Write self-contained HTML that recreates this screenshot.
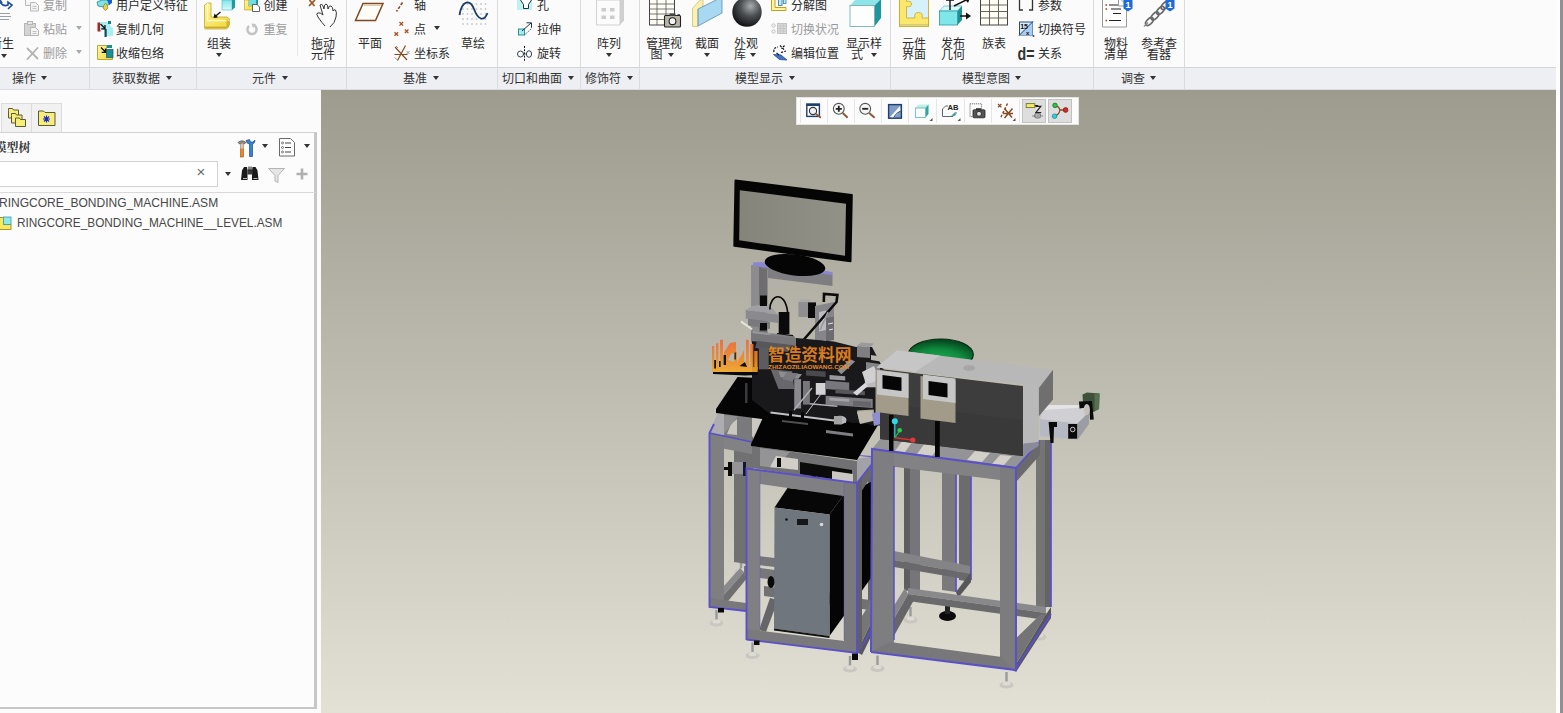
<!DOCTYPE html>
<html lang="zh-CN">
<head>
<meta charset="utf-8">
<title>RINGCORE_BONDING_MACHINE</title>
<style>
*{box-sizing:border-box;margin:0;padding:0}
html,body{width:1563px;height:713px;overflow:hidden;background:#fbfbfc}
body{position:relative;font-family:"Liberation Sans","Noto Sans CJK SC",sans-serif;font-size:12px;color:#2b2b2b}
.abs{position:absolute}
#ribbon{position:absolute;left:0;top:0;width:1556px;height:67px;background:#fbfbfc}
#glabels{position:absolute;left:0;top:67px;width:1556px;height:23px;z-index:2;background:#eeeff2;border-top:1px solid #d3d5d9;border-bottom:1px solid #dcdde0}
.vsep{position:absolute;top:0;width:1px;height:89px;background:#d9dbdf;z-index:3}
.t{position:absolute;white-space:nowrap;line-height:14px;height:14px;font-size:12px;color:#2b2b2b}
.g{color:#9a9a9a}
.gl{z-index:3;position:absolute;top:72px;white-space:nowrap;line-height:14px;font-size:12px;color:#333}
.ar{z-index:3;position:absolute;width:0;height:0;border-left:3.5px solid transparent;border-right:3.5px solid transparent;border-top:4px solid #333}
.ar.g{border-top-color:#aaa}
#leftp{position:absolute;left:0;top:89px;width:321px;height:624px;background:#fbfbfb}
#view{position:absolute;left:321px;top:89px;width:1235px;height:624px;background:linear-gradient(#9d9b8e,#e3e1d6)}
.tree{font-size:13px;line-height:16px;color:#484848;white-space:nowrap;transform-origin:0 0}
#redge{position:absolute;left:1556px;top:0;width:4px;height:713px;background:#fdfdfd}
#redge2{position:absolute;left:1560px;top:0;width:3px;height:713px;background:#909092}
</style>
</head>
<body>
<div id="ribbon"></div>
<div id="glabels"></div>
<div class="vsep" style="left:89px"></div><div class="vsep" style="left:196px"></div><div class="vsep" style="left:346px"></div><div class="vsep" style="left:497px"></div><div class="vsep" style="left:580px"></div><div class="vsep" style="left:639px"></div><div class="vsep" style="left:890px"></div><div class="vsep" style="left:1093px"></div><div class="vsep" style="left:1184px"></div><div class="abs" style="left:297px;top:8px;width:1px;height:48px;background:#e6e7ea"></div>
<div class="t" style="left:-10px;top:37px">新生</div>
<div class="ar" style="left:0.5px;top:54px"></div>
<div class="t g" style="left:43px;top:-1.5px">复制</div>
<div class="t g" style="left:43px;top:22.5px">粘贴</div>
<div class="ar g" style="left:75.5px;top:26px"></div>
<div class="t g" style="left:43px;top:46.5px">删除</div>
<div class="ar g" style="left:75.5px;top:50px"></div>
<div class="t" style="left:116px;top:-1.5px">用户定义特征</div>
<div class="t" style="left:116px;top:22.5px">复制几何</div>
<div class="t" style="left:116px;top:46.5px">收缩包络</div>
<div class="t" style="left:207px;top:37px">组装</div>
<div class="ar" style="left:215.5px;top:53px"></div>
<div class="t" style="left:263.500px;top:-1.5px">创建</div>
<div class="t g" style="left:263.500px;top:22.5px">重复</div>
<div class="t" style="left:311px;top:36.5px">拖动</div>
<div class="t" style="left:311px;top:48px">元件</div>
<div class="t" style="left:358px;top:37px">平面</div>
<div class="t" style="left:414px;top:-1.5px">轴</div>
<div class="t" style="left:414px;top:22.5px">点</div>
<div class="ar" style="left:433.5px;top:26px"></div>
<div class="t" style="left:414px;top:46.5px">坐标系</div>
<div class="t" style="left:461px;top:37px">草绘</div>
<div class="t" style="left:537px;top:-1.5px">孔</div>
<div class="t" style="left:537px;top:22.5px">拉伸</div>
<div class="t" style="left:537px;top:46.5px">旋转</div>
<div class="t" style="left:597px;top:37px">阵列</div>
<div class="ar" style="left:605.5px;top:53px"></div>
<div class="t" style="left:646px;top:36.5px">管理视</div>
<div class="t" style="left:650.500px;top:48px">图</div>
<div class="ar" style="left:667.5px;top:53px"></div>
<div class="t" style="left:695px;top:37px">截面</div>
<div class="ar" style="left:703.5px;top:53px"></div>
<div class="t" style="left:734px;top:36.5px">外观</div>
<div class="t" style="left:734px;top:48px">库</div>
<div class="ar" style="left:749.5px;top:53px"></div>
<div class="t" style="left:791px;top:-1.5px">分解图</div>
<div class="t g" style="left:791px;top:22.5px">切换状况</div>
<div class="t" style="left:791px;top:46.5px">编辑位置</div>
<div class="t" style="left:846px;top:36.5px">显示样</div>
<div class="t" style="left:851px;top:48px">式</div>
<div class="ar" style="left:870.500px;top:53px"></div>
<div class="t" style="left:902px;top:36.5px">元件</div>
<div class="t" style="left:902px;top:48px">界面</div>
<div class="t" style="left:941px;top:36.5px">发布</div>
<div class="t" style="left:941px;top:48px">几何</div>
<div class="t" style="left:982px;top:37px">族表</div>
<div class="t" style="left:1038px;top:-1.5px">参数</div>
<div class="t" style="left:1038px;top:22.5px">切换符号</div>
<div class="t" style="left:1038px;top:46.5px">关系</div>
<div class="t" style="left:1104px;top:36.5px">物料</div>
<div class="t" style="left:1104px;top:48px">清单</div>
<div class="t" style="left:1141px;top:36.5px">参考查</div>
<div class="t" style="left:1147px;top:48px">看器</div>
<div class="gl" style="left:12px">操作</div>
<div class="ar" style="left:40.5px;top:76px"></div>
<div class="gl" style="left:112px">获取数据</div>
<div class="ar" style="left:165.5px;top:76px"></div>
<div class="gl" style="left:252px">元件</div>
<div class="ar" style="left:281.5px;top:76px"></div>
<div class="gl" style="left:403px">基准</div>
<div class="ar" style="left:432.5px;top:76px"></div>
<div class="gl" style="left:502px">切口和曲面</div>
<div class="ar" style="left:567.5px;top:76px"></div>
<div class="gl" style="left:585px">修饰符</div>
<div class="ar" style="left:626.5px;top:76px"></div>
<div class="gl" style="left:735px">模型显示</div>
<div class="ar" style="left:788.5px;top:76px"></div>
<div class="gl" style="left:962px">模型意图</div>
<div class="ar" style="left:1014.5px;top:76px"></div>
<div class="gl" style="left:1121px">调查</div>
<div class="ar" style="left:1149.5px;top:76px"></div><svg class="abs" style="left:0;top:0" width="1200" height="67" viewBox="0 0 1200 67">
<defs>
<radialGradient id="sph" cx="0.62" cy="0.3" r="0.75"><stop offset="0" stop-color="#a9adb0"/><stop offset="0.45" stop-color="#4d5154"/><stop offset="1" stop-color="#0c0d0e"/></radialGradient>
<linearGradient id="yl" x1="0" y1="0" x2="1" y2="1"><stop offset="0" stop-color="#fdf6a0"/><stop offset="1" stop-color="#f2d838"/></linearGradient>
<linearGradient id="cy" x1="0" y1="0" x2="0" y2="1"><stop offset="0" stop-color="#7fe6ea"/><stop offset="1" stop-color="#d8fafa"/></linearGradient>
</defs>
<!-- regenerate -->
<path d="M0,2 Q3,7 8,5 L8,2 L12,5 L8,9 M0,0 L2,3" fill="none" stroke="#1f4f9a" stroke-width="1.6"/>
<path d="M0,13.5h10M0,16.5h11M0,19.5h9" stroke="#9aa0a8" stroke-width="1"/>
<!-- copy (gray) -->
<g fill="#f2f2f2" stroke="#b9b9b9" stroke-width="1"><path d="M25.5,0v5.5h5"/><path d="M30.5,2.5h5l3,3v5.5h-8z"/><path d="M32.5,6.5h4M32.5,8.5h4" stroke-width="0.8"/></g>
<!-- paste (gray) -->
<g stroke="#b5b5b5" stroke-width="1"><rect x="24.5" y="23.5" width="11" height="12" fill="#d4d4d4"/><rect x="27.5" y="21.5" width="5" height="3" fill="#e6e6e6"/><path d="M30.5,27.5h5l3,3v5h-8z" fill="#f4f4f4"/><path d="M32.5,31.5h4M32.5,33.5h4" stroke-width="0.8"/></g>
<!-- delete X (gray) -->
<path d="M27.5,48.5l10,10M37.5,48l-10,11" stroke="#b2b2b2" stroke-width="1.8" stroke-linecap="round"/>
<!-- UDF -->
<polygon points="97,2 102,0 108,0 110,4 104,7 98,6" fill="#7fe2e8" stroke="#1d8a90" stroke-width="0.8"/><polygon points="107,0 112,0 112,3 109,5" fill="#1f5fc8"/><path d="M105.5,3 Q110,8 105.5,10.5 Q101,8 105.5,3Z" fill="#e8cf48" stroke="#8a7a20" stroke-width="0.7"/>
<!-- copy geom -->
<rect x="97.5" y="22.5" width="3" height="9" fill="#b02222"/><polygon points="100,22 110,22 110,26 113,28 113,36 106,36 106,30 100,30" fill="#a9eef0"/><rect x="104.5" y="29" width="2.2" height="8" fill="#0f4f55"/><rect x="108" y="21" width="3" height="3" fill="#168088"/><path d="M100.5,24l4.5,4.5M105,25v3.8h-3.8" stroke="#111" stroke-width="1.3" fill="none"/>
<!-- shrinkwrap -->
<path d="M97.5,45.5h9v8h6v6h-15z" fill="url(#yl)" stroke="#a89420" stroke-width="0.8"/><rect x="106.5" y="49.5" width="6.5" height="8" fill="#1b8f96" stroke="#0f5f65" stroke-width="0.7"/><rect x="107" y="45" width="5" height="3" fill="#1b8f96"/><path d="M101,47.5l4.5,4.5M105.5,48.5v3.8h-3.8" stroke="#111" stroke-width="1.3" fill="none"/>
<!-- assemble -->
<polygon points="222,0 232,0 232,10 222,10" fill="url(#cy)" stroke="#4db8bf" stroke-width="0.6"/><polygon points="232,0 235,0 235,7.5 232,10" fill="#1f9aa2"/>
<path d="M204.5,5l3,-2h3.5v14h16l2.5,2v6l-2.5,2.5h-22.500z" fill="url(#yl)" stroke="#bfa828" stroke-width="0.8"/><path d="M207.500,3.200v17.500h22" fill="none" stroke="#fffbd0" stroke-width="1.2"/><path d="M226.500,19l2.500,2v6l-2.500,2.500h-22v-3h22z" fill="#c9a820" opacity="0.75"/>
<path d="M220.500,12l-6,5" stroke="#111" stroke-width="1.3"/><polygon points="213.500,18 214.500,13.500 218,17.500" fill="#111"/>
<!-- create -->
<path d="M244.500,0h4v6h6v4h-10z" fill="url(#yl)" stroke="#bfa828" stroke-width="0.7"/><rect x="249" y="0" width="8" height="6" fill="#6fdde2"/><rect x="256" y="0" width="2" height="6" fill="#1f9aa2"/><path d="M252.500,4.500h4.500l2.500,2.500v4.500h-7z" fill="#fff" stroke="#555" stroke-width="0.9"/>
<!-- repeat (gray) -->
<path d="M249,26 A4.600,4.600 0 1 0 254.500,25.600" fill="none" stroke="#c2c2c2" stroke-width="2.4"/><polygon points="251.500,23.500 256,24 253,28" fill="#c2c2c2"/>
<!-- drag hand -->
<path d="M309.500,0l5,6M315,0l-6,6" stroke="#a3521e" stroke-width="1.7"/>
<path d="M320,5 Q322,3 323,6 L324,9 Q324,4 326,4 Q328,4 328,9 Q329,5 331,6 Q333,7 333,11 Q334,9 335.500,10 Q337,12 336,17 Q335,23 330,27 M320,5 L323,15 Q320,12 317.500,13 Q316,14 318,17 Q322,23 325,26" fill="#fff" stroke="#333" stroke-width="1"/>
<!-- plane -->
<polygon points="363,3.500 383,3.500 375.500,20.500 355.500,20.500" fill="#fffdf8" stroke="#7a4a22" stroke-width="1.5"/><polygon points="364,5 381,5 380.500,6 363.500,6" fill="#e8c9a0"/>
<!-- axis -->
<path d="M402.500,2.500L396.500,11.500" stroke="#8a4a22" stroke-width="1.6" stroke-dasharray="3 1.600"/>
<!-- point -->
<path d="M399.500,22l3.600,3.600M403.100,22l-3.600,3.600M394.500,32.200l3.600,3.600M398.100,32.200l-3.600,3.600M404.800,29.500l3.600,3.600M408.400,29.500l-3.600,3.600" stroke="#a3521e" stroke-width="1.3"/>
<!-- csys -->
<path d="M395,47l12,13M405.500,45.500l-8,15M394.500,54.500h13" stroke="#8a4a22" stroke-width="1.200"/><path d="M406.500,51l3,3M409.500,51l-3,3M394.500,57.500l3,2.500M396,46l2,2" stroke="#8a8a8a" stroke-width="0.900"/>
<!-- sketch -->
<g fill="#c3c7cc"><circle cx="463" cy="4" r="0.9"/><circle cx="467.500" cy="4" r="0.9"/><circle cx="472" cy="4" r="0.9"/><circle cx="476.500" cy="4" r="0.9"/><circle cx="481" cy="4" r="0.9"/><circle cx="485.500" cy="4" r="0.9"/>
<circle cx="463" cy="9" r="0.9"/><circle cx="467.500" cy="9" r="0.9"/><circle cx="472" cy="9" r="0.9"/><circle cx="476.500" cy="9" r="0.9"/><circle cx="481" cy="9" r="0.9"/><circle cx="485.500" cy="9" r="0.9"/>
<circle cx="463" cy="14" r="0.9"/><circle cx="467.500" cy="14" r="0.9"/><circle cx="472" cy="14" r="0.9"/><circle cx="476.500" cy="14" r="0.9"/><circle cx="481" cy="14" r="0.9"/><circle cx="485.500" cy="14" r="0.9"/>
<circle cx="463" cy="19" r="0.9"/><circle cx="467.500" cy="19" r="0.9"/><circle cx="472" cy="19" r="0.9"/><circle cx="476.500" cy="19" r="0.9"/><circle cx="481" cy="19" r="0.9"/><circle cx="485.500" cy="19" r="0.9"/>
<circle cx="463" cy="24" r="0.9"/><circle cx="467.500" cy="24" r="0.9"/><circle cx="472" cy="24" r="0.9"/><circle cx="476.500" cy="24" r="0.9"/><circle cx="481" cy="24" r="0.9"/><circle cx="485.500" cy="24" r="0.9"/></g>
<path d="M459.500,15 C462,0 470,-1 474,9 C478,20 484,22 487.500,13" fill="none" stroke="#1d3a66" stroke-width="1.8"/>
<!-- hole -->
<rect x="517" y="0" width="15" height="10" fill="#bff1f3"/><path d="M520.500,0l3,4.500v4h5v-4l3,-4.500" fill="#fff" stroke="#234" stroke-width="1"/>
<!-- extrude -->
<rect x="518.500" y="29" width="6" height="6" fill="#a5ecee" stroke="#1d8a90" stroke-width="0.9"/><path d="M522,31l9,-8M526.500,22.800h5v5" fill="none" stroke="#234" stroke-width="1"/><path d="M524.500,35l7,-6.500" stroke="#234" stroke-width="0.8" stroke-dasharray="1.500 1"/>
<!-- revolve -->
<circle cx="520.500" cy="54" r="3" fill="none" stroke="#345" stroke-width="1"/><ellipse cx="529" cy="54" rx="2.600" ry="3.300" fill="none" stroke="#345" stroke-width="1"/><path d="M524.500,46v15" stroke="#111" stroke-width="1" stroke-dasharray="2 1.200"/><path d="M523.500,54h3" stroke="#345" stroke-width="0.8"/>
</svg>
<svg class="abs" style="left:0;top:0" width="1200" height="67" viewBox="0 0 1200 67">
<!-- pattern cube -->
<polygon points="596.5,0 620,0 620,25 596.500,25" fill="#fbfbfb" stroke="#c8c8c8" stroke-width="0.800"/><polygon points="620,0 624,0 624,20.500 620,25" fill="#cfcfcf"/>
<g fill="#c9cbcd"><rect x="601.500" y="8" width="4.500" height="3.500"/><rect x="610" y="8" width="4.500" height="3.500"/><rect x="601.500" y="15.500" width="4.500" height="3.500"/><rect x="610" y="15.500" width="4.500" height="3.500"/></g>
<!-- manage views -->
<rect x="649.500" y="-1" width="25" height="26" fill="#fffef6" stroke="#444" stroke-width="1"/><path d="M649.500,4h25M649.500,9h25M649.500,14h25M649.500,19.500h25M657,-1v26M666,-1v26" stroke="#555" stroke-width="0.800" fill="none"/>
<rect x="664.500" y="15.500" width="16" height="11.500" rx="1" fill="#b9b5a8" stroke="#222" stroke-width="1.100"/><rect x="669.500" y="13.500" width="6" height="2.500" fill="#444"/><circle cx="672.500" cy="21.200" r="3.400" fill="#f4f4f4" stroke="#222" stroke-width="1.100"/><rect x="677.500" y="14.300" width="2.500" height="1.600" fill="#222"/>
<!-- section -->
<polygon points="692.500,8.500 699,1 703,-1 703,18 698,26.500 692.500,26.500" fill="#fbf1b0" stroke="#c8b860" stroke-width="0.700"/><polygon points="698,9 722,-3 722,13 698,26" fill="#a9d8f2" stroke="#5a8fb0" stroke-width="0.800"/><path d="M698,9v17" stroke="#8aa" stroke-width="0.800"/>
<!-- sphere -->
<circle cx="747" cy="12" r="14.700" fill="url(#sph)"/>
<!-- explode -->
<path d="M771.500,0v10.500h14.500v-3h-11v-7.500" fill="#fff3a0" stroke="#c0a020" stroke-width="1"/><rect x="778.500" y="-1" width="3.500" height="6.500" fill="#bfe6f6" stroke="#3a7fb0" stroke-width="0.900"/><rect x="783.500" y="-1" width="2.500" height="4.500" fill="#bfe6f6" stroke="#3a7fb0" stroke-width="0.800"/>
<!-- toggle status (gray) -->
<g stroke="#c4c4c4" fill="#f4f4f4"><circle cx="773.500" cy="25.500" r="1.700"/><circle cx="773.500" cy="31.500" r="1.700"/><rect x="777.500" y="23.500" width="9" height="10" fill="#d9d9d9"/></g><path d="M777.500,26h9M777.500,28.500h9M777.500,31h9M780.500,23.500v10M783.500,23.500v10" stroke="#c0c0c0" stroke-width="0.600"/>
<!-- edit position -->
<path d="M774,52 Q773,47.500 778,47 M780,45.500 l4.500,4.500 M784.500,45.500 l-3,3.200M781,52.500 l5,-1.500" fill="none" stroke="#111" stroke-width="1.200" stroke-dasharray="2.200 1.200"/><polygon points="773.500,54.500 781,55 787,60 779.500,59.500" fill="#3c74c8" stroke="#1d3f7e" stroke-width="0.700"/><path d="M776.500,53 l2.500,2" stroke="#111" stroke-width="1.100"/>
<!-- display style cube -->
<polygon points="850,5.500 856,-1 881,-1 874.500,5.500" fill="#8fe4ea"/><polygon points="874.500,5.500 881,-1 881,18 874.500,26.500" fill="#1f969e"/><rect x="850" y="5.500" width="24.500" height="21" fill="#fdfefe" stroke="#6aa" stroke-width="0.800"/>
<!-- component interface -->
<rect x="899.500" y="-1" width="29" height="27.500" fill="#d6f1fa" stroke="#d2b632" stroke-width="1"/><path d="M899.500,-1h7v2.500q5,-1 5,2.500q0,3.500 -5,2.500v11.500h8.500q-1.500,-5.500 3.500,-5.500q5,0 3.500,5.500h6.500v7h-29z" fill="#fbe76c" stroke="#c8a828" stroke-width="0.800"/>
<!-- publish geometry -->
<polygon points="939.500,11 944,6 962,6 957.500,11" fill="#d9f8f8" stroke="#4aa" stroke-width="0.600"/><polygon points="957.500,11 962,6 962,20 957.500,25" fill="#1f8f96"/><rect x="939.500" y="11" width="18" height="14" fill="#7fe6ea" stroke="#2a9aa0" stroke-width="0.800"/>
<path d="M950,10v-11M946,0h8M954,6l12,-6M960,16h8" stroke="#111" stroke-width="1.400" fill="none"/><polygon points="970,-2 964,-2 968,3" fill="#111"/><polygon points="971,16 966,12.500 966,19.500" fill="#111"/>
<!-- family table -->
<rect x="980.500" y="-1" width="27" height="26" fill="#fffef4" stroke="#444" stroke-width="1"/><path d="M980.500,5h27M980.500,11.500h27M980.500,18h27M989.500,-1v26M998.500,-1v26" stroke="#555" stroke-width="0.900" fill="none"/>
<!-- parameters -->
<path d="M1023,-1h-3.500v11h3.500M1029,-1h3.500v11h-3.500" fill="none" stroke="#333" stroke-width="1.300"/>
<!-- switch symbols -->
<rect x="1019.500" y="22" width="13" height="13" fill="#d9ecfa" stroke="#2a4f8a" stroke-width="1"/><polygon points="1019.500,35 1032.500,22 1032.500,35" fill="#a9cdf0"/><path d="M1019,35.500L1033,21.500" stroke="#1d3f7e" stroke-width="1"/><text x="1020.200" y="29.300" font-family="'Liberation Sans',sans-serif" font-size="7" font-weight="bold" fill="#111">15</text><text x="1026" y="34.500" font-family="'Liberation Sans',sans-serif" font-size="6" font-weight="bold" fill="#111">x</text><circle cx="1033.500" cy="36" r="1" fill="#2a4f8a"/>
<text x="1017.500" y="59.500" font-family="'Liberation Sans',sans-serif" font-size="17.500" font-weight="bold" fill="#333" textLength="17" lengthAdjust="spacingAndGlyphs">d=</text>
<!-- BOM -->
<path d="M1102.500,-1v28h24v-22l-6,-6z" fill="#fff" stroke="#9a9a9a" stroke-width="1"/><path d="M1118.500,-1v7h8" fill="none" stroke="#9a9a9a" stroke-width="1"/>
<path d="M1109,5h9M1111,9h10M1113,13.500h8M1109,20.500h12" stroke="#222" stroke-width="1.100"/><path d="M1105.500,5h1.600M1105.500,9h1.600M1105.500,20.500h1.600" stroke="#b03a1a" stroke-width="1.600"/>
<path d="M1123.500,-1h9v9.500l-4.500,3l-4.500,-3z" fill="#1d6ad8"/><text x="1125.600" y="8" font-family="'Liberation Sans',sans-serif" font-size="9" font-weight="bold" fill="#fff">1</text>
<!-- ref viewer -->
<g fill="none" stroke="#6a6a6a" stroke-width="1.700"><ellipse cx="1149.500" cy="21.500" rx="4.800" ry="2.600" transform="rotate(-45 1149.500 21.500)"/><ellipse cx="1155" cy="16" rx="4.800" ry="2.600" transform="rotate(-45 1155 16)"/><ellipse cx="1160.500" cy="10.500" rx="4.800" ry="2.600" transform="rotate(-45 1160.500 10.500)"/><ellipse cx="1165" cy="5.500" rx="4.800" ry="2.600" transform="rotate(-45 1165 5.500)"/></g>
<path d="M1144,26.500l4,-4" stroke="#8a8a8a" stroke-width="1.500"/>
<path d="M1165.500,-1h9v9.500l-4.500,3l-4.500,-3z" fill="#1d6ad8"/><text x="1167.600" y="8" font-family="'Liberation Sans',sans-serif" font-size="9" font-weight="bold" fill="#fff">1</text>
</svg>

<div id="leftp">
<div class="abs" style="left:1px;top:14px;width:31px;height:30px;background:#f1f1f1;border:1px solid #dcdcdc;border-bottom:none"></div>
<div class="abs" style="left:31px;top:14px;width:31px;height:30px;background:#f1f1f1;border:1px solid #dcdcdc;border-bottom:none"></div>
<div class="abs" style="left:-2px;top:43px;width:319px;height:577px;border:2px solid #c6c6c6;border-right:3px solid #c6c6c6;border-top:1px solid #d2d2d2;background:#fcfcfc"></div>
<div class="abs" style="left:-5.500px;top:51px;font-size:12px;font-weight:bold;color:#333;line-height:16px;white-space:nowrap;font-family:'Liberation Serif','Noto Serif CJK SC',serif">模型树</div>
<div class="ar" style="left:261.500px;top:55px"></div>
<div class="ar" style="left:303.500px;top:55px"></div>
<div class="abs" style="left:-2px;top:72px;width:220px;height:26px;border:1px solid #d2d2d2;background:#fff"></div>
<div class="abs" style="left:196.500px;top:73.500px;font-size:15px;line-height:18px;color:#6a6a6a">×</div>
<div class="ar" style="left:224.500px;top:83px"></div>
<div class="abs" style="left:0;top:103px;width:316px;height:1px;background:#d9d9d9"></div>
<div class="abs tree" style="left:-1.500px;top:105.500px;transform:scaleX(0.925)">RINGCORE_BONDING_MACHINE.ASM</div>
<div class="abs tree" style="left:16.500px;top:125.500px;transform:scaleX(0.909)">RINGCORE_BONDING_MACHINE__LEVEL.ASM</div>
<svg class="abs" style="left:0;top:0" width="321" height="150" viewBox="0 89 321 150">
<!-- tab 1 folders -->
<g fill="#f7ee7a" stroke="#5a5a3a" stroke-width="1"><path d="M8.500,110.500v-2h4l1,1.500h5v8h-10z"/><path d="M11.500,115.500v-2h4l1,1.500h5.500v8h-10.500z"/><path d="M15.500,120v-2h4l1,1.500h5v7h-10z"/></g>
<!-- tab 2 folder star -->
<path d="M38.500,113v-2h5l1.500,1.500h10v13h-16.500z" fill="#f7ee7a" stroke="#5a5a3a" stroke-width="1"/><path d="M46.500,115.500v7M43,119h7M44,116.500l5,5M49,116.500l-5,5" stroke="#1a2ac8" stroke-width="1.100"/>
<!-- tools icon -->
<path d="M238,142.500 q4,-3.500 8,0 l-1.500,1.500 h-5z" fill="#8a8a8a" stroke="#555" stroke-width="0.700"/><rect x="240.500" y="143.500" width="3" height="13.500" fill="#e88a2a" stroke="#9a5210" stroke-width="0.600"/><rect x="240.500" y="143.500" width="3" height="5" fill="#c8c8c8"/>
<path d="M246,140.500 q1,3.500 3.500,3.500 v12.500 h3 v-12.500 q2.500,-0.500 2.500,-4 l-2,2 h-2.500 l-1,-2.500z" fill="#3a7fd0" stroke="#1d4f8a" stroke-width="0.700"/>
<!-- list icon -->
<path d="M279.500,138.500h11l4,4v13.500h-15z" fill="#fff" stroke="#6a6a6a" stroke-width="1"/><path d="M285,143h6M285,147.500h6M285,152h6" stroke="#444" stroke-width="1"/><circle cx="282.500" cy="143" r="1" fill="none" stroke="#444" stroke-width="0.700"/><circle cx="282.500" cy="147.500" r="1" fill="none" stroke="#444" stroke-width="0.700"/><circle cx="282.500" cy="152" r="1" fill="none" stroke="#444" stroke-width="0.700"/>
<!-- binoculars -->
<path d="M242,170.500l2,-3.500h3l0.500,3.500v9.500h-6.500z M252.500,167h3l2,3.500l1,9.500h-6.500v-9.500z" fill="#1a1a1a"/><rect x="247.500" y="169.500" width="5" height="5" fill="#3a3a3a"/><path d="M243,178.500h4M253.500,178.500h4" stroke="#bbb" stroke-width="1"/><path d="M249,166.500v4M251,166.500v4" stroke="#111" stroke-width="1"/>
<!-- funnel (gray) -->
<path d="M268.500,168.500h16l-6.500,7v7l-3,-1.500v-5.500z" fill="#e6e6e6" stroke="#b4b4b4" stroke-width="1"/>
<!-- plus (gray) -->
<path d="M302,168.500v11M296.500,174h11" stroke="#b0b0b0" stroke-width="2.600"/>
<!-- tree asm icon -->
<path d="M-1,217.500h5v7h7v5h-12z" fill="#f7e860" stroke="#9a8a20" stroke-width="0.900"/><rect x="3.500" y="217" width="7.500" height="7.500" fill="#8fe8ee" stroke="#3a9aa0" stroke-width="0.800"/>
</svg>

</div>
<div id="view">
<svg class="abs" style="left:0;top:0" width="1235" height="624" viewBox="321 89 1235 624">
<defs>
<linearGradient id="scr" x1="0" y1="0" x2="1" y2="0"><stop offset="0" stop-color="#84847a"/><stop offset="1" stop-color="#929288"/></linearGradient>
<radialGradient id="dome" cx="0.45" cy="0.75" r="0.7"><stop offset="0" stop-color="#1fb45a"/><stop offset="0.6" stop-color="#0f8a3e"/><stop offset="1" stop-color="#064a20"/></radialGradient>
<g id="foot"><rect x="-1.2" y="-13" width="2.4" height="11" fill="#9a9a9a"/><ellipse cx="0" cy="0" rx="7" ry="3.6" fill="#c9c7c0"/><ellipse cx="0" cy="-1.5" rx="4" ry="2" fill="#dddbd4"/></g>
</defs>
<!-- ===== feet (back) ===== -->
<use href="#foot" x="741" y="572"/>
<use href="#foot" x="910.5" y="620"/>
<use href="#foot" x="1039.5" y="637"/>
<use href="#foot" x="829" y="605"/>
<ellipse cx="947.5" cy="616" rx="8.5" ry="5" fill="#0a0a0a"/><rect x="945" y="606" width="5" height="8" fill="#222"/>
<!-- ===== Frame C back ===== -->
<g stroke-linejoin="round">
<!-- back-right post -->
<polygon points="1036,440 1051,440 1051,607 1036,607" fill="#757576"/>
<polygon points="1045,440 1051,440 1051,607 1045,607" fill="#646466"/>
<line x1="1051" y1="440" x2="1051" y2="607" stroke="#5a50c8" stroke-width="1.7"/>
<!-- back-left post of C -->
<polygon points="904,462 920,464 920,592 904,590" fill="#76767a"/>
<polygon points="904,462 910,463 910,591 904,590" fill="#5e5e62"/>
<!-- frame D inner posts -->
<polygon points="942,468 956,470 956,592 942,590" fill="#7a7a7c"/>
<line x1="956" y1="470" x2="956" y2="592" stroke="#5a50c8" stroke-width="1.7"/>
<polygon points="959,470 971,472 971,582 959,580" fill="#6c6c6e"/>
<line x1="971" y1="472" x2="971" y2="580" stroke="#5a50c8" stroke-width="1.7"/>
<!-- frame D bottom beams -->
<polygon points="894,551 970,566 970,574 894,560" fill="#848486"/>
<polygon points="894,560 970,574 970,580 894,567" fill="#69696b"/>
<polygon points="956,592 971,572 971,582 958,598" fill="#58585a"/>
<!-- C bottom back beam -->
<polygon points="908,588 1046,607 1046,613 908,594" fill="#89898b"/>
<polygon points="908,594 1046,613 1046,620 908,601" fill="#6a6a6c"/>
<!-- C bottom left side beam -->
<polygon points="882,640 908,594 914,600 890,643" fill="#666668"/>
<polygon points="875,636 905,588 908,594 882,640" fill="#868688"/>
<!-- C bottom right side beam -->
<polygon points="1013,669 1047,613 1051,607 1051,618 1016,672" fill="#565658"/>
<polygon points="1002,652 1040,615 1047,613 1013,669" fill="#747476"/>
<line x1="1014" y1="671" x2="1051" y2="614" stroke="#5a50c8" stroke-width="1.8"/>
</g>
<!-- ===== Frame A back ===== -->
<g>
<polygon points="734,414 753,416 753,565 734,562" fill="#717172"/>
<!-- A bottom left side beam -->
<polygon points="722,597 744,572 748,577 724,606" fill="#6f6f70"/>
<polygon points="715,596 740,568 744,572 722,597" fill="#8a8a8c"/>
<!-- A back bottom beam -->
<polygon points="744,566 775,570 775,580 744,576" fill="#777779"/>
</g>
<!-- ===== Frame B back parts ===== -->
<g>
<!-- back-left post B -->
<polygon points="759,556 775,558 775,567 759,565" fill="#767678"/>
<!-- back-right post B -->
<polygon points="868,462 880,462 880,600 868,602" fill="#646466"/>
<!-- bottom back beam -->
<polygon points="764,586 870,600 870,610 764,596" fill="#717173"/>
<!-- bottom left side beam -->
<polygon points="759,630 770,598 778,600 766,632" fill="#666668"/>
<!-- bottom right side beam -->
<polygon points="857,652 880,604 884,610 862,655" fill="#58585a"/>
<polygon points="847,640 872,600 880,604 857,652" fill="#767678"/>
<line x1="858" y1="653" x2="884" y2="608" stroke="#5a50c8" stroke-width="1.7"/>
</g>
<!-- ===== Cabinet ===== -->
<g>
<polygon points="829.5,514.5 844,494.5 871,482 871,578 829.5,636" fill="#050505"/>
<polygon points="774.5,507.5 787.5,488 844,494.5 829.5,514.5" fill="#070707"/>
<polygon points="774.5,507.5 829.5,514.5 829.5,636 774,628.5" fill="#6f767d"/>
<polygon points="774,628.5 829.5,636 829.5,638 774,630.5" fill="#111"/>
<rect x="797" y="519" width="11" height="6" fill="#15171a"/>
<circle cx="786.5" cy="519.5" r="1.3" fill="#111"/><circle cx="821.5" cy="524.5" r="1.8" fill="#d8d8d8"/>
<ellipse cx="771" cy="582" rx="3.5" ry="6" fill="#0a0a0a"/>
</g>
<!-- ===== Frame A front ===== -->
<g>
<!-- top left side beam -->
<polygon points="709.5,433 717,414 724,414 724,436" fill="#adadb1"/>
<!-- inner diagonal light area under plate -->
<polygon points="724,414 752,416 752,442 724,436" fill="#7a7a7c"/>
<polygon points="731,424 737,419 737,435 727,434" fill="#c9c7bf"/><polygon points="724,415 738,416 724,434" fill="#909092"/><polygon points="752,418 767,418 761,431 752,437" fill="#cac8c0"/>
<!-- top front beam -->
<polygon points="709.5,433 752,442 752,454 709.5,446" fill="#828284"/>
<!-- front-left post -->
<polygon points="709.5,433 724,436 724,608 709.5,607" fill="#7f7f81"/>
<!-- bottom front beam -->
<polygon points="709.5,598 746,603 746,611 709.5,607" fill="#79797b"/>
<polyline points="714,424 709.5,433 709.5,607 746,611" fill="none" stroke="#5a50c8" stroke-width="1.9"/>
<polyline points="709.5,433 752,442" fill="none" stroke="#5a50c8" stroke-width="1.7"/>
<!-- small black fixture -->
<rect x="728" y="462" width="4" height="14" fill="#0a0a0a"/><rect x="724" y="467" width="8" height="3" fill="#0a0a0a"/>
<rect x="732" y="462" width="12" height="12" fill="#949496"/><rect x="743" y="462" width="3" height="14" fill="#161630"/>
</g>
<use href="#foot" x="716.5" y="623"/><rect x="718" y="608" width="6" height="4.500" fill="#0a0a0a"/>
<!-- ===== Frame B front ===== -->
<g>
<!-- under-plate top structure -->
<polygon points="752,446 857,461 857,484 752,468" fill="#717173"/>
<polygon points="760,448 790,452 775,468 760,466" fill="#949496"/>
<polygon points="776,456 798,459 798,470 770,467" fill="#d0cec6"/>
<polygon points="800,462 852,470 852,482 800,474" fill="#0b0b0b"/>
<polygon points="832,471 853,474 853,483 832,480" fill="#c9c7bf"/>
<rect x="777" y="458" width="4" height="9" fill="#0b0b0b"/><rect x="812" y="472" width="4" height="9" fill="#0b0b0b"/>
<!-- right side top beam -->
<polygon points="857,482.500 871.500,464.500 871.500,476 861,492" fill="#68686c"/>
<polygon points="857,458.700 871.500,456.600 871.500,465 857,482.500" fill="#a2a2a8"/>
<polyline points="859,455.500 871.500,456.600" fill="none" stroke="#6a62cc" stroke-width="1.200"/>
<!-- top front beam -->
<polygon points="746.5,468.500 857,483 857,498 746.5,482" fill="#808082"/>
<!-- front-left post -->
<polygon points="746.5,468.500 760,470 760,641 746.5,639.5" fill="#808082"/>
<!-- front-right post -->
<polygon points="844,481 857,483 857,653 844,651" fill="#7a7a7c"/>
<polygon points="857,483 862,477 862,647 857,653" fill="#606062"/>
<!-- bottom front beam -->
<polygon points="746.5,629 857,642.5 857,653 746.5,639.5" fill="#7a7a7c"/>
<!-- blue outline -->
<polyline points="746.5,640 746.5,468.500 857,483 857,653 746.5,639.5" fill="none" stroke="#5a50c8" stroke-width="1.9"/>
<polyline points="857,483 871.500,464.500" fill="none" stroke="#5a50c8" stroke-width="1.8"/>
<polyline points="760,470 760,628" fill="none" stroke="#5b52c8" stroke-width="0.8" opacity="0.6"/>
<polyline points="844,483 844,640" fill="none" stroke="#5b52c8" stroke-width="0.8" opacity="0.5"/>
</g>
<use href="#foot" x="752.5" y="655.5"/><rect x="754" y="640.500" width="5.500" height="4.500" fill="#0a0a0a"/>
<use href="#foot" x="850" y="669"/><rect x="852" y="653.500" width="6" height="6.500" fill="#0a0a0a"/>
<!-- ===== Frame C front ===== -->
<g>
<!-- top surface with slats -->
<polygon points="872,449 886,432 1040,447 1016,468" fill="#949496"/>
<polygon points="903,440 913,441 905,452 895,451" fill="#d2d0c8"/>
<polygon points="925,443 940,445 932,456 917,454" fill="#d2d0c8"/>
<polygon points="975,451 990,453 982,462 967,460" fill="#d2d0c8"/>
<polygon points="1000,455 1012,456 1004,465 992,464" fill="#d2d0c8"/>
<!-- right top side beam -->
<polygon points="1016,468 1040,441 1040,455 1016,482" fill="#6a6a6c"/>
<!-- top front beam -->
<polygon points="872,449 1016,468 1016,482 872,464" fill="#828284"/>
<!-- front-left post -->
<polygon points="872,449 894,452 894,644 872,652" fill="#7e7e80"/>
<!-- front-right post -->
<polygon points="1000,466 1016,468 1016,670 1000,668" fill="#7c7c7e"/>
<!-- bottom front beam -->
<polygon points="890,642 1002,657 1013,670 871,652" fill="#78787a"/>
<polyline points="871,652 872,449 1016,468 1016,670 871,652" fill="none" stroke="#5a50c8" stroke-width="2.0"/>
<polyline points="1016,468 1040,441" fill="none" stroke="#5a50c8" stroke-width="1.8"/>
<polyline points="894,466 894,640" fill="none" stroke="#5a50c8" stroke-width="1.5"/>
</g>
<use href="#foot" x="877.5" y="668.5"/>
<use href="#foot" x="1006.5" y="685"/>
<!-- ===== column + shelf ===== -->
<g>
<polygon points="751.500,265 767.500,268 767.500,345 751.500,343" fill="#6e6e70"/>
<polygon points="751.500,265 759,266 759,344 751.500,343" fill="#8c8c8e"/>
<polygon points="753,265 832.500,274 832.500,286 768,278 768,270" fill="#7e7e82"/>
<polygon points="753,262.500 760,262 832.500,272 832.500,275 753,266" fill="#8a86d2"/>
</g>
<!-- camera arm -->
<g>
<polygon points="745.700,310 778,314.500 778,323 745.700,318.500" fill="#8a8a8e"/>
<polygon points="752,306 768,304 778,314.500 745.700,310" fill="#a0a0a4"/>
<polygon points="748,318.500 770,322 770,329 748,325.500" fill="#7a7a7e"/>
<rect x="760" y="295.500" width="7" height="10.500" fill="#0b0b0b"/>
<rect x="760" y="323" width="7" height="7.500" fill="#0b0b0b"/>
<polygon points="741.500,320.500 752.500,328.500 751.500,330 740.500,322.500" fill="#e6e4dc"/>
<path d="M769.800,309.500 C770,294 785,290 787.700,312.500" fill="none" stroke="#0b0b0b" stroke-width="1.700"/>
<rect x="778.700" y="312" width="10.700" height="22" fill="#0a0a0a"/>
<polygon points="777,333 793,335 795,340.500 776,338.500" fill="#101010"/>
<polygon points="751,330.500 795,336.500 795,346.500 751,341" fill="#808084"/>
<polygon points="753,331 772,333.500 764,340 751,338" fill="#98989c"/>
</g>
<!-- right mechanism -->
<g>
<rect x="798.400" y="302" width="10" height="15" fill="#8f8f92"/>
<polygon points="798.400,302 801,299.500 811,299.500 808.400,302" fill="#a8a8ab"/>
<rect x="808" y="302.400" width="8" height="15.600" fill="#0b0b0b"/>
<polygon points="815,306 834,302 834,338 815,342" fill="#85858a"/>
<polygon points="819,312 826,310.500 826,330 819,331.500" fill="#bcbcc0"/>
<polygon points="826,318 834,316.500 834,340 826,341.500" fill="#6c6c70"/>
<path d="M829,330l4,-1M828,324l5,-1M820,320l5,-1" stroke="#e6e6e8" stroke-width="1"/>
<path d="M823.800,302 L824,294 L837.400,295 L836.500,302 L803,340.500" fill="none" stroke="#0b0b0b" stroke-width="2.600"/>
<line x1="828" y1="312" x2="820" y2="330" stroke="#9a9a9e" stroke-width="1.600"/>
<line x1="811" y1="319" x2="798" y2="337" stroke="#b4b4b8" stroke-width="2"/>
</g>
<!-- ===== black plate A ===== -->
<polygon points="716,409 737.5,377 800,380 796,420 762,419 716,413" fill="#050505"/>
<rect x="745" y="383" width="2.5" height="20" fill="#3a3a3e"/>
<!-- mechanism clutter -->
<g>
<polygon points="752,341 796,338 834,341.500 856,347 872,347 886,374 884,426 770,414 752,400" fill="#19191b"/>
<polygon points="751,333 796,338 796,346 751,341" fill="#777779"/>
<polygon points="757,341 792,345 788,352 755,348" fill="#58585a"/>
<polygon points="758.9,347.7 768.7,347.7 768.7,369.3 758.9,369.3" fill="#5c5c60"/>
<polygon points="770.7,369.3 792.2,371.2 794.2,388.9 778.5,388.9" fill="#68686c"/>
<polygon points="778.5,371.2 802.1,374.2 798.1,379.1 780.5,377.1" fill="#8e8e92"/>
<polygon points="794.2,379.1 801.1,379.1 801.1,408.5 794.2,408.5" fill="#8a8a8e"/>
<polygon points="803.0,381.0 809.9,381.0 809.9,404.6 803.0,404.6" fill="#77777b"/>
<polygon points="815.8,383.0 825.6,383.0 825.6,394.8 815.8,394.8" fill="#d2d2d4"/>
<polygon points="825.6,380.6 849.2,382.6 849.2,390.8 825.6,388.9" fill="#77777d"/>
<polygon points="829.5,375.1 845.2,376.3 845.2,380.6 829.5,379.5" fill="#9a9a9e"/>
<polygon points="835.4,388.9 864.9,391.2 864.9,395.2 835.4,393.2" fill="#55555a"/>
<polygon points="864.9,373.6 876.6,373.6 876.6,387.3 864.9,387.3" fill="#bdbdbf"/>
<polygon points="853.1,392.8 864.9,383.0 868.0,386.1 857.0,395.6" fill="#d8d8da"/>
<polygon points="825.6,395.8 872.7,399.1 872.7,408.1 825.6,404.6" fill="#7e7e82"/>
<polygon points="829.5,397.7 849.2,399.1 849.2,401.8 829.5,400.5" fill="#a4a4a8"/>
<polygon points="853.1,400.7 870.8,401.8 870.8,406.9 853.1,405.8" fill="#66666a"/>
<polygon points="809.9,403.0 837.4,405.4 837.4,406.9 809.9,404.6" fill="#b0b0b4"/>
<polygon points="857.0,410.5 873.7,409.5 874.7,420.3 859.4,422.6" fill="#b2ad9c"/>
<polygon points="786.4,372.2 798.1,373.6 792.2,381.4 782.4,379.1" fill="#7a7a7e"/>
<polygon points="806.0,370.2 825.6,371.6 825.6,377.1 806.0,375.5" fill="#4a4a4e"/>
<polygon points="837.4,370.2 851.1,359.4 855.1,361.4 841.3,374.2" fill="#8e8e92"/>
<line x1="812" y1="388" x2="794" y2="410" stroke="#b4b4b6" stroke-width="1.300"/>
<line x1="821" y1="394" x2="806" y2="414" stroke="#c4c4c8" stroke-width="1"/>
</g>
<!-- ===== black plate B ===== -->
<polygon points="751,444 765,413 878,425 857,460 751,446" fill="#040404"/>
<line x1="770.5" y1="412.5" x2="846" y2="422" stroke="#c2c2c6" stroke-width="1.8"/>
<rect x="789" y="411" width="3" height="6" fill="#050505"/><rect x="801" y="412.5" width="3" height="6" fill="#050505"/>
<ellipse cx="840" cy="420" rx="6.5" ry="4.2" fill="#b9b9bd"/><rect x="834" y="416" width="8" height="8.4" fill="#a3a3a3"/>
<polygon points="857,412 872,411 873,421 860,424" fill="#bdb9ac"/>
<polygon points="826,430 853,433.5 853,436.5 826,433" fill="#7f7f81"/>
<polygon points="782,420 808,423 808,425 782,422" fill="#4f4f50"/>
<polygon points="872,414 880,410 881,424 874,426" fill="#8f8fd0"/>
<!-- pre-oven blocks -->
<polygon points="857,346 870,347 870,358 857,357" fill="#7f7f81"/>
<polygon points="857,346 861,342.5 874,343.5 870,347" fill="#9a9a9c"/>
<polygon points="871,355 884,357 884,362 871,360" fill="#bab7ac"/>
<polygon points="866,362 880,364 880,372 866,372" fill="#848486"/>
<polygon points="862,372 874,366 880,380 866,384" fill="#d0d0d2"/>
<!-- ===== oven ===== -->
<g>
<!-- green dome -->
<ellipse cx="940.8" cy="354.5" rx="32.5" ry="15.5" fill="url(#dome)" stroke="#06280f" stroke-width="1.2"/>
<!-- conveyor behind -->
<polygon points="1040,419 1077.500,423.500 1077.500,440 1040,436" fill="#b6b9c4"/>
<polygon points="1040,419 1044,405 1081,405 1089,412 1077.500,423.500" fill="#d0d0d4"/>
<polygon points="1044,405 1081,405 1084,407.500 1042.500,410" fill="#e4e4e6"/>
<polygon points="1077.500,423.500 1089,412 1089,424 1077.500,440" fill="#9c9ca4"/>
<rect x="1068.200" y="424" width="9" height="14.700" fill="#0a0a0a"/><circle cx="1072.700" cy="429.500" r="2.300" fill="#1a1a1a" stroke="#c8c8c8" stroke-width="1"/>
<path d="M1048.600,422h8.400v5h-3l-0.500,16h-3z" fill="#0a0a0a"/>
<polygon points="1082.500,394.500 1087,392.500 1099.500,393.500 1099,409 1093.500,412 1083,403" fill="#3d5238"/>
<polygon points="1094.500,393.200 1099.500,393.500 1099,409 1094.500,411" fill="#55704e"/>
<path d="M1079,401.500 L1092,401 L1093.800,419.500 L1090,419.800 L1089.500,407 L1079.500,408.500 Z" fill="#0a0a0a"/>
<ellipse cx="1086.800" cy="409.500" rx="3" ry="5.500" fill="#c4c2bb"/>
<!-- top face -->
<polygon points="876.500,367.500 897,350.300 1053,369.800 1038.700,388.200 1023.300,384" fill="#b8b8b8"/>
<polygon points="876.500,367.500 897,350.300 940,355.600 915,372" fill="#c6c6c6"/>
<ellipse cx="969" cy="368" rx="6" ry="3" fill="#a6a6a6"/>
<!-- right faces -->
<polygon points="1038.700,388.200 1053,369.800 1053,399.500 1038.700,416.500" fill="#6f6f6f"/>
<polygon points="1023.300,384 1038.700,388.200 1038.700,442 1023.300,443.500" fill="#b9b9b9"/>
<polygon points="1023.300,443.500 1038.700,442 1038.700,446 1023.300,456" fill="#8a8a9a"/>
<!-- front face -->
<polygon points="880,369 1023,386 1023,456 880,439" fill="#3d3d3d"/>
<polygon points="880,403 1023,420 1023,456 880,439" fill="#393939"/>
<!-- left window -->
<polygon points="875.5,369.5 908.5,373.5 908.5,416 875.5,412" fill="#a29b89"/>
<polygon points="877,370 908.5,374 908.5,398 877,394.5" fill="#c6c6c6"/>
<polygon points="882.5,375 901.5,377.5 901.5,391 882.5,388.5" fill="#060606"/>
<!-- right window -->
<polygon points="920.5,376 955.5,380.5 955.5,423 920.5,418.5" fill="#a29b89"/>
<polygon points="923,374.5 955.5,378.5 955.5,403 923,399" fill="#c6c6c6"/>
<polygon points="928.5,381 947.5,383.5 947.5,397.5 928.5,395" fill="#060606"/>
<!-- black posts -->
<rect x="889" y="415" width="4.5" height="36" fill="#060606"/>
<rect x="935" y="421" width="4.8" height="36" fill="#060606"/>
</g>
<!-- triad -->
<g>
<line x1="894.8" y1="437.8" x2="894.8" y2="423" stroke="#22c8d8" stroke-width="1.3"/>
<line x1="894.8" y1="437.8" x2="899.5" y2="431" stroke="#22c040" stroke-width="1.3"/>
<line x1="894.8" y1="437.8" x2="912" y2="440" stroke="#d83030" stroke-width="1.5"/>
<circle cx="894.8" cy="421.3" r="3" fill="#30d8e6"/><circle cx="899.7" cy="430.3" r="2.3" fill="#30c850"/><circle cx="912.8" cy="440" r="2.6" fill="#e03a3a"/>
</g>
<!-- ===== monitor ===== -->
<g>
<ellipse cx="795" cy="265" rx="30.5" ry="10.5" fill="#050505" transform="rotate(7 795 265)"/>
<polygon points="735.5,180.5 851.8,195 850.5,261.3 734.3,245.8" fill="#050505" stroke="#050505" stroke-width="2" stroke-linejoin="round"/>
<polygon points="739.8,190.3 846,203.7 845,255.7 739.2,240.3" fill="url(#scr)"/>
</g>
<!-- ===== watermark ===== -->
<g>
<linearGradient id="wm" gradientUnits="userSpaceOnUse" x1="0" y1="340" x2="0" y2="372"><stop offset="0" stop-color="#ee6a3a"/><stop offset="0.6" stop-color="#f28a24"/><stop offset="1" stop-color="#f4aa28"/></linearGradient>
<polygon points="713,372 757.500,372 757.500,375 745,375.500 713,374" fill="#0a0a0a"/>
<g fill="url(#wm)" opacity="0.9">
<rect x="712" y="346" width="2.200" height="24"/><rect x="716" y="343.300" width="2.400" height="26.700"/><rect x="720" y="339.800" width="3" height="30"/>
<rect x="746" y="339.800" width="2.800" height="30"/><rect x="750.200" y="344" width="3.200" height="26"/><rect x="754.200" y="351" width="3.400" height="19"/>
<path d="M724,370 L724,352 L730,343 L736,342 L736,352 L731,354 L728,360 L734,362 L735,352 L737,352 L737,362 L741,356 L744,350 L744,370 Z"/>
<polygon points="712,367 757.600,367 757.600,372 712,372"/>
</g>
<g fill="#161208"><rect x="714.200" y="360" width="1.800" height="8.500"/><rect x="719" y="361" width="1.600" height="6"/><rect x="723.600" y="355" width="2.400" height="10"/><rect x="734.500" y="352.500" width="1.300" height="7"/><polygon points="739.500,366 745,362 747,367"/></g>
<text x="768" y="360.5" font-family="'Liberation Sans','Noto Sans CJK SC',sans-serif" font-size="16.700" font-weight="bold" fill="#f28a22" opacity="0.880">智造资料网</text>
<text x="768" y="368.5" font-family="'Liberation Sans',sans-serif" font-size="5.2" font-weight="bold" fill="#e88a28" textLength="81" lengthAdjust="spacingAndGlyphs">ZHIZAOZILIAOWANG.COM</text>
</g>

</svg>

<div class="abs" style="left:474.5px;top:8px;width:283.5px;height:27.5px;background:#fcfcfc;border:1px solid #e4e4e0"></div>
<div class="abs" style="left:700.5px;top:10px;width:24px;height:24px;background:#dedede;border:1px solid #c2c2c2"></div>
<div class="abs" style="left:727px;top:10px;width:24px;height:24px;background:#dedede;border:1px solid #c2c2c2"></div>
<svg class="abs" style="left:474px;top:8px" width="285" height="28" viewBox="795 97 285 28">
<g stroke="#e6e6e6" stroke-width="1"><line x1="800.5" y1="99" x2="800.5" y2="123"/><line x1="827.5" y1="99" x2="827.5" y2="123"/><line x1="854.5" y1="99" x2="854.5" y2="123"/><line x1="881.5" y1="99" x2="881.5" y2="123"/><line x1="908.5" y1="99" x2="908.5" y2="123"/><line x1="936.5" y1="99" x2="936.5" y2="123"/><line x1="964.5" y1="99" x2="964.5" y2="123"/><line x1="991.5" y1="99" x2="991.5" y2="123"/><line x1="1019.5" y1="99" x2="1019.5" y2="123"/></g>
<!-- 1 zoom window -->
<rect x="806.8" y="104" width="12.6" height="12.4" fill="#fff" stroke="#1d3f6e" stroke-width="1.4"/><rect x="806.8" y="104" width="12.6" height="2" fill="#1d3f6e"/>
<circle cx="813" cy="111" r="3.6" fill="#eef2f6" stroke="#333" stroke-width="1.1"/><line x1="815.8" y1="113.8" x2="820.8" y2="117.8" stroke="#8a5a3a" stroke-width="1.8"/>
<!-- 2 zoom in -->
<circle cx="838.8" cy="108.8" r="5.4" fill="#f6f6f6" stroke="#555" stroke-width="1.1"/><path d="M835.8,108.8h6M838.8,105.8v6" stroke="#222" stroke-width="1.8"/><line x1="842.8" y1="113" x2="847.6" y2="117.8" stroke="#8a5a3a" stroke-width="2"/>
<!-- 3 zoom out -->
<circle cx="865.2" cy="108.8" r="5.4" fill="#f6f6f6" stroke="#555" stroke-width="1.1"/><path d="M862.2,108.8h6" stroke="#222" stroke-width="1.8"/><line x1="869.2" y1="113" x2="874.6" y2="117.8" stroke="#8a5a3a" stroke-width="2"/>
<!-- 4 repaint -->
<rect x="888.6" y="104.6" width="12.8" height="13.6" fill="#7f9bc6" stroke="#1d3f6e" stroke-width="1.4"/><path d="M890,117 L900,106 L900.5,111 L894,117.5Z" fill="#f4f7fb"/><path d="M893.5,117.5 Q897,112 900.8,111" stroke="#1d3f6e" stroke-width="1" fill="none"/>
<!-- 5 shaded cube -->
<polygon points="915.5,108 918.5,104.5 928.5,104.5 925.5,108" fill="#bfeee9"/><polygon points="925.5,108 928.5,104.5 928.5,114 925.5,117.5" fill="#2fa7a0"/><rect x="915.5" y="108" width="10" height="9.5" fill="#fbfefe" stroke="#58b8b2" stroke-width="0.8"/><polygon points="932.5,118 932.5,121 929.5,121" fill="#555"/>
<!-- 6 annotation -->
<path d="M942.5,116.5 V109 L945.5,106 H948 M942.5,116.5 H953 L956,113.5 V112" fill="none" stroke="#667" stroke-width="1"/><polygon points="951,115.8 955.5,111.8 955.5,115.8" fill="#3aa7a0"/>
<text x="947.6" y="110.2" font-family="'Liberation Sans',sans-serif" font-size="7.6" font-weight="bold" fill="#222">AB</text><polygon points="960.5,118 960.5,121 957.5,121" fill="#555"/>
<!-- 7 saved views camera -->
<rect x="970" y="103.8" width="11.6" height="12.8" fill="#fafafa" stroke="#666" stroke-width="0.9" stroke-dasharray="1.2 0.8"/><rect x="973" y="109.8" width="12" height="8" rx="1" fill="#555" stroke="#222" stroke-width="0.8"/><rect x="976" y="108.2" width="5" height="2" fill="#333"/><circle cx="979" cy="113.8" r="2.5" fill="#ddd" stroke="#222" stroke-width="0.9"/>
<!-- 8 datum display -->
<path d="M998,104l3.4,3.4M1001.4,104l-3.4,3.4" stroke="#8a4a22" stroke-width="1.2"/><path d="M1007.5,103.5L1000.5,118" stroke="#8a4a22" stroke-width="1.4" stroke-dasharray="2.6 1.6"/><path d="M1004.5,108.5l7.5,9M1012.5,108.5l-8,9.5M1003,113.5h10" stroke="#8a4a22" stroke-width="1.5"/><polygon points="1015.5,118 1015.5,121 1012.5,121" fill="#555"/>
<!-- 9 -->
<rect x="1026.2" y="103.6" width="8.6" height="4" fill="#f2ea6a" stroke="#77752a" stroke-width="0.9"/><path d="M1034.8,105.6h3.4M1035.6,106.4h5.2l-5,6.2h5.4" fill="none" stroke="#222" stroke-width="1.2"/><ellipse cx="1037.6" cy="115.8" rx="3.4" ry="2.4" fill="#bbb" stroke="#666" stroke-width="0.8"/><path d="M1032.2,116h11" stroke="#666" stroke-width="0.9" stroke-dasharray="1.5 1"/>
<!-- 10 -->
<path d="M1055,105.6 Q1059.5,106.6 1059.8,110 Q1059.5,114.6 1054.6,116 M1059.8,110 H1065" fill="none" stroke="#8a4a22" stroke-width="1.3"/><circle cx="1055" cy="105.4" r="2.3" fill="#2ec24a" stroke="#146a26" stroke-width="0.7"/><circle cx="1054.6" cy="116.2" r="2.3" fill="#2fd3e0" stroke="#157c86" stroke-width="0.7"/><circle cx="1065.6" cy="110" r="2.4" fill="#d02a2a" stroke="#7a1414" stroke-width="0.7"/>
</svg>

</div>
<div id="redge"></div><div id="redge2"></div>
</body>
</html>
